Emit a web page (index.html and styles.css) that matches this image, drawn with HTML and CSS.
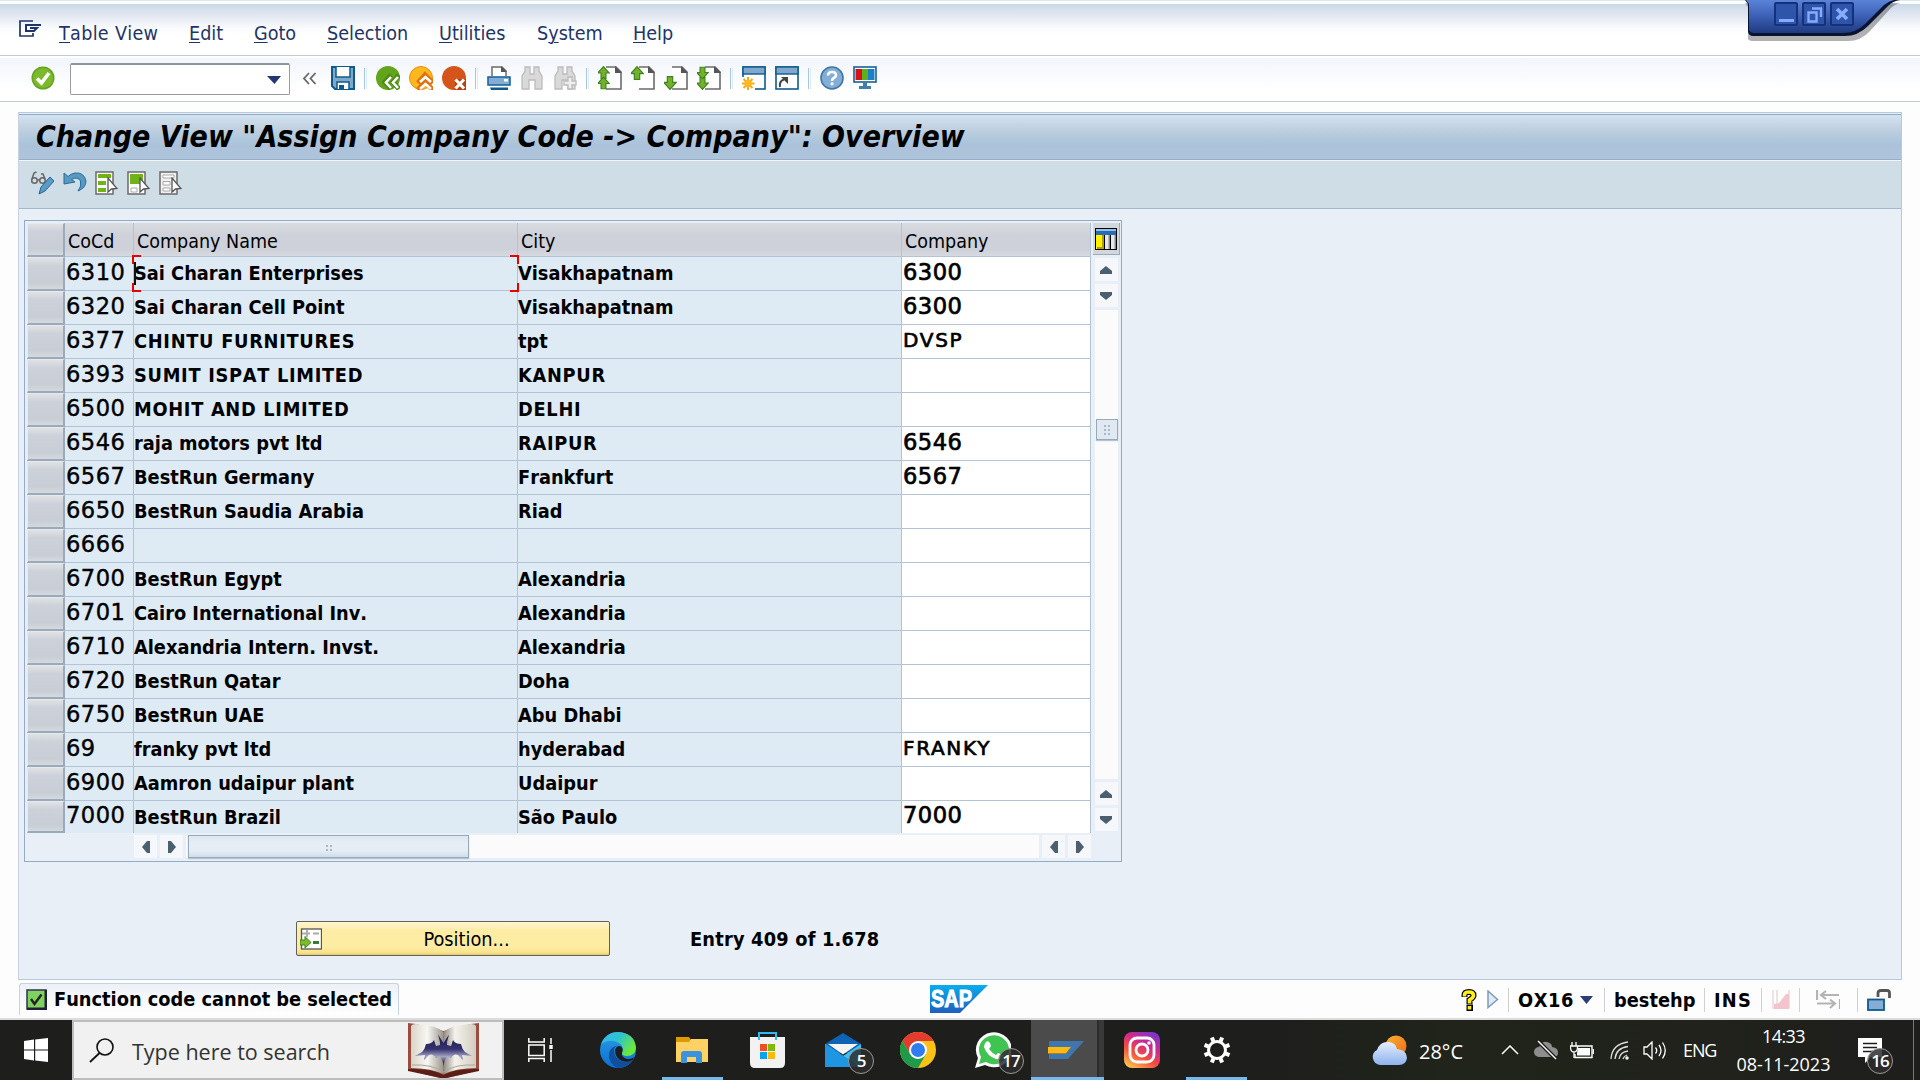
FILE: index.html
```
<!DOCTYPE html>
<html lang="en">
<head>
<meta charset="utf-8">
<title>Change View "Assign Company Code -&gt; Company": Overview</title>
<link rel="stylesheet" href="styles.css">
</head>
<body>
<svg class="defs" width="0" height="0">
  <defs>
    <linearGradient id="edge1" x1="0" y1="0" x2="1" y2="0.5"><stop offset="0" stop-color="#3ab8f2"/><stop offset=".5" stop-color="#2cc3d0"/><stop offset="1" stop-color="#6be83c"/></linearGradient>
    <linearGradient id="edge2" x1="0" y1="0" x2="0" y2="1"><stop offset="0" stop-color="#2b9ce6"/><stop offset="1" stop-color="#0a6fd0"/></linearGradient>
    <linearGradient id="insta" x1="0.2" y1="1" x2="0.8" y2="0"><stop offset="0" stop-color="#fdc04f"/><stop offset=".35" stop-color="#f4503c"/><stop offset=".65" stop-color="#d22a8c"/><stop offset="1" stop-color="#7a35cf"/></linearGradient>
    <linearGradient id="sapg" x1="0" y1="0" x2="0" y2="1"><stop offset="0" stop-color="#08aeee"/><stop offset="1" stop-color="#1f5fbd"/></linearGradient>
    <linearGradient id="win" x1="0" y1="0" x2="0" y2="1"><stop offset="0" stop-color="#5a83d8"/><stop offset=".5" stop-color="#3a5fb4"/><stop offset="1" stop-color="#1f3a80"/></linearGradient>
    <linearGradient id="page1" x1="0" y1="0" x2="1" y2="0"><stop offset="0" stop-color="#d9d4c8"/><stop offset=".5" stop-color="#f8f7f2"/><stop offset="1" stop-color="#9a968c"/></linearGradient>
    <linearGradient id="page2" x1="0" y1="0" x2="1" y2="0"><stop offset="0" stop-color="#8f8b82"/><stop offset=".35" stop-color="#f4f2ec"/><stop offset="1" stop-color="#d2cdc0"/></linearGradient>
    <linearGradient id="ink" x1="0" y1="0" x2="0" y2="1"><stop offset="0" stop-color="#1e1d4a"/><stop offset=".45" stop-color="#34326e"/><stop offset=".68" stop-color="#a4a2c4"/><stop offset=".85" stop-color="#35336c"/></linearGradient>
    <linearGradient id="cloud" x1="0" y1="0" x2="0" y2="1"><stop offset="0" stop-color="#e6eefc"/><stop offset="1" stop-color="#8db3ee"/></linearGradient>
    <linearGradient id="sun" x1="0" y1="0" x2="1" y2="1"><stop offset="0" stop-color="#fbb034"/><stop offset="1" stop-color="#ee6a1a"/></linearGradient>
    <symbol id="up" viewBox="0 0 12 8"><path d="M6 0L12 5V8H0V5Z" fill="#4c5f6e"/></symbol>
    <symbol id="page" viewBox="0 0 24 24"><path d="M8 1H18L23 6V23H8" fill="#fff" stroke="#6b6b6b" stroke-width="1.600"/><path d="M17 0V7H24Z" fill="#555"/></symbol>
    <symbol id="aup" viewBox="0 0 12 12"><path d="M6 .5L11.400 6.500H8.300V11.500H3.700V6.500H.6Z" fill="#74b02a" stroke="#3c8220"/></symbol>
    <symbol id="cursor" viewBox="0 0 11 18"><path d="M1 1V15L4.500 12L10 11.500Z" fill="#fff" stroke="#555" stroke-width="1.300"/></symbol>
  </defs>
</svg>

<div class="sap">
  <header class="menubar">
    <svg class="menu-icon" width="23" height="17" viewBox="0 0 23 17"><path d="M14 1H1V16H14V13" fill="none" stroke="#1f3568" stroke-width="1.700"/><path d="M22 5H7V11H15L18 8H11" fill="none" stroke="#1f3568" stroke-width="2"/></svg>
    <nav class="menus">
      <a class="wide"><u>T</u>able View</a><a><u>E</u>dit</a><a><u>G</u>oto</a><a><u>S</u>election</a><a><u>U</u>tilities</a><a>S<u>y</u>stem</a><a><u>H</u>elp</a>
    </nav>
    <svg class="window-controls" width="160" height="46" viewBox="0 0 160 46">
      <path d="M5 0L8 4V36Q9 38 14 38H108Q121 38 130 28L151 5Q156 0 162 0" fill="#000" opacity=".3" transform="translate(0 3)"/>
      <path d="M5 0L8 4V32Q9 36 13 36H105Q118 36 128 26L148 6Q153 1 160 0Z" fill="#0a1430"/>
      <path d="M6 0L9 4V30Q10 33 14 33H103Q116 33 125 24L144 5Q149 1 154 0Z" fill="url(#win)"/>
      <g fill="#2e55aa" stroke="#17307a" stroke-width="2"><rect x="35" y="3" width="22" height="22" rx="1"/><rect x="63" y="3" width="22" height="22" rx="1"/><rect x="91" y="3" width="22" height="22" rx="1"/></g>
      <path d="M39 20.500H54" stroke="#86abff" stroke-width="3"/>
      <path d="M68.500 12.500H76.500V21.500H68.500ZM72 8.500H81V17" fill="none" stroke="#86abff" stroke-width="2.400"/>
      <path d="M97 9L107 19M107 9L97 19" stroke="#86abff" stroke-width="3.600"/>
    </svg>
  </header>

  <div class="toolbar">
    <svg class="ok" width="24" height="24" viewBox="0 0 24 24"><circle cx="12" cy="12" r="11.500" fill="#64a51f"/><circle cx="12" cy="12" r="10" fill="#7dba2b"/><path d="M6 12.500L10.500 17L18 7" fill="none" stroke="#fff" stroke-width="3.600"/></svg>
    <div class="command"><svg width="14" height="9" viewBox="0 0 14 9"><path d="M0 1H14L7.500 9Z" fill="#22366f"/></svg></div>
    <svg class="collapse" width="15" height="13" viewBox="0 0 15 13"><path d="M7 1L2 6.500L7 12M13.500 1L8.500 6.500L13.500 12" fill="none" stroke="#666" stroke-width="1.800"/></svg>
    <svg width="24" height="24" viewBox="0 0 24 24"><path d="M1 1H23V23H4L1 20Z" fill="#7fa8cc" stroke="#0f5a8c" stroke-width="2"/><path d="M5 1V11H19V1" fill="#fff" stroke="#0f5a8c" stroke-width="1.500"/><path d="M6 23V16H18V23" fill="#fff" stroke="#0f5a8c" stroke-width="1.500"/><path d="M8 19H13V23H8Z" fill="#0f5a8c"/></svg>
    <i class="sep"></i>
    <svg width="24" height="24" viewBox="0 0 24 24"><circle cx="12" cy="12" r="12" fill="#63a41d"/><path d="M15 9L9 16L15 23M23 9L17 16L23 23" fill="none" stroke="#4d8a17" stroke-width="5"/><path d="M15 11L10 16.500L15 22M22 11L17 16.500L22 22" fill="none" stroke="#fff" stroke-width="2.600"/></svg>
    <svg width="24" height="24" viewBox="0 0 24 24"><circle cx="12" cy="12" r="11.500" fill="#fcb81c" stroke="#ee8a12"/><path d="M9 17L16 9L24 17M9 24L16 16L24 24" fill="none" stroke="#e2700e" stroke-width="5"/><path d="M11 16L16.500 11L22 16M11 23L16.500 18L22 23" fill="none" stroke="#fff" stroke-width="2.600"/></svg>
    <svg width="24" height="24" viewBox="0 0 24 24"><circle cx="12" cy="12" r="12" fill="#d4541a"/><path d="M13 13H24V24H13Z" fill="#b8400e"/><path d="M13.500 13.500L22 22.500M22 13.500L13.500 22.500" stroke="#fff" stroke-width="3.200"/></svg>
    <i class="sep"></i>
    <svg width="24" height="24" viewBox="0 0 24 24"><path d="M5 10V1H15L19 5V10" fill="#fff" stroke="#6b6b6b" stroke-width="1.500"/><path d="M14 0V6H20Z" fill="#555"/><rect x="1" y="11" width="22" height="8" fill="#84add4" stroke="#1b679c" stroke-width="1.600"/><rect x="17" y="13" width="4" height="2.500" fill="#fff"/><path d="M3 21.500H21V24H4Z" fill="#0f5a8c"/></svg>
    <svg width="24" height="24" viewBox="0 0 24 24"><path id="bino" d="M2 23V10L5 5V1H10V8H14V1H19V5L22 10V23H15V14H9V23Z" fill="#d9d9d9" stroke="#bcbcbc" stroke-width="1.300"/></svg>
    <svg width="24" height="24" viewBox="0 0 24 24"><use href="#bino"/><path d="M15 11H19V15H23V19H19V23H15V19H11V15H15Z" fill="#eee" stroke="#bcbcbc" stroke-width="1.300"/></svg>
    <i class="sep"></i>
    <svg width="24" height="24" viewBox="0 0 24 24"><use href="#page" width="24" height="24"/><use href="#aup" x="-1" width="13" height="13"/><use href="#aup" x="-1" y="10.500" width="13" height="13"/></svg>
    <svg width="24" height="24" viewBox="0 0 24 24"><use href="#page" width="24" height="24"/><use href="#aup" x="-1" width="14" height="14"/></svg>
    <svg width="24" height="24" viewBox="0 0 24 24"><use href="#page" width="24" height="24"/><use href="#aup" x="-1" width="14" height="14" transform="translate(0 24) scale(1 -1)"/></svg>
    <svg width="24" height="24" viewBox="0 0 24 24"><use href="#page" width="24" height="24"/><g transform="translate(0 24) scale(1 -1)"><use href="#aup" x="-1" width="13" height="13"/><use href="#aup" x="-1" y="10.500" width="13" height="13"/></g></svg>
    <i class="sep"></i>
    <svg width="24" height="24" viewBox="0 0 24 24"><rect x="1" y="1" width="22" height="22" fill="#fff" stroke="#0f5a8c" stroke-width="1.600"/><rect x="1" y="1" width="22" height="7" fill="#7fa8cc" stroke="#0f5a8c" stroke-width="1.400"/><path d="M0 11H13V24H0Z" fill="#fff"/><path d="M6 11V24M0 17.500H12.500M1.500 13L10.500 22M10.500 13L1.500 22" stroke="#f8a81c" stroke-width="2"/><circle cx="6" cy="17.500" r="3.700" fill="#fcb81c"/></svg>
    <svg width="24" height="24" viewBox="0 0 24 24"><rect x="1" y="1" width="22" height="22" fill="#fff" stroke="#0f5a8c" stroke-width="1.600"/><rect x="1" y="1" width="22" height="7" fill="#7fa8cc" stroke="#0f5a8c" stroke-width="1.400"/><path d="M5 21Q4 15 9 13.500" fill="none" stroke="#444" stroke-width="2"/><path d="M6 11H13V18Z" fill="#444"/></svg>
    <i class="sep"></i>
    <svg width="24" height="24" viewBox="0 0 24 24"><circle cx="12" cy="12" r="11" fill="#85aed6" stroke="#3f76a8" stroke-width="1.600"/><path d="M8 9.500Q8 6 12 6T16 9Q16 11 13.500 12.200Q12 13 12 15" fill="none" stroke="#fff" stroke-width="2.500"/><rect x="10.700" y="16.500" width="2.700" height="2.700" fill="#fff"/></svg>
    <svg width="24" height="24" viewBox="0 0 24 24"><rect x="1" y="1" width="22" height="15" fill="#fff" stroke="#1b5f92" stroke-width="1.600"/><path d="M2.500 3H9V14H2.500Z" fill="#d3121c"/><path d="M9 3H15V14H9Z" fill="#5fae1e"/><path d="M15 3H21.500V14H15Z" fill="#1c7fc9"/><path d="M10 16H14V20H18V23H6V20H10Z" fill="#3f7fae"/></svg>
  </div>

  <main class="panel">
    <h1 class="title">Change View "Assign Company Code -&gt; Company": Overview</h1>
    <div class="appbar">
      <svg width="24" height="24" viewBox="0 0 24 24"><g fill="none" stroke="#666" stroke-width="1.500"><circle cx="3.500" cy="9.500" r="2.800"/><circle cx="11.500" cy="9.500" r="2.800"/><path d="M6.200 9H8.800M1 8L3 2L5.500 1M14 8L12 3H10M16 9L19 12"/></g><path d="M8 23L10 16L19 6L23 10L14 20Z" fill="#5b9bc6" stroke="#1f6796"/></svg>
      <svg width="24" height="24" viewBox="0 0 24 24"><path d="M1 2V13L12 11L8.500 8.500Q15 5 17.500 10Q19 15 15 20Q23 17 23 10Q21 1 12 2Q8 2.500 5 5.500Z" fill="#5b98c0" stroke="#1f6f9c"/></svg>
      <svg width="24" height="24" viewBox="0 0 24 24"><path d="M1 1H18V23H1Z" fill="#fff" stroke="#6b6b6b" stroke-width="1.500"/><path d="M3 3H16V7H3ZM3 10H11V14H3ZM3 17H11V21H3Z" fill="#6fb417"/><use href="#cursor" x="12" y="6" width="11" height="18"/></svg>
      <svg width="24" height="24" viewBox="0 0 24 24"><path d="M1 1H18V23H1Z" fill="#fff" stroke="#6b6b6b" stroke-width="1.500"/><path d="M3 3H16V13H3Z" fill="#6fb417"/><path d="M4 17H10V21H4Z" fill="none" stroke="#aaa"/><use href="#cursor" x="12" y="6" width="11" height="18"/></svg>
      <svg width="24" height="24" viewBox="0 0 24 24"><path d="M1 1H18V23H1Z" fill="#f1f1f1" stroke="#6b6b6b" stroke-width="1.500"/><path d="M4 4H15V7H4ZM4 10.500H11V14H4ZM4 17H11V20H4Z" fill="#fff" stroke="#aaa"/><use href="#cursor" x="12" y="6" width="11" height="18"/></svg>
    </div>

    <div class="content">
      <section class="table-control">
        <div class="grid">
          <div class="row head"><b></b><span>CoCd</span><span>Company Name</span><span>City</span><span>Company</span></div>
          <div class="row"><b></b><span class="mono">6310</span><span>Sai Charan Enterprises<i class="corners"></i></span><span>Visakhapatnam</span><span class="mono edit">6300</span></div>
          <div class="row"><b></b><span class="mono">6320</span><span>Sai Charan Cell Point</span><span>Visakhapatnam</span><span class="mono edit">6300</span></div>
          <div class="row"><b></b><span class="mono">6377</span><span class="upper">CHINTU FURNITURES</span><span>tpt</span><span class="mono edit caps">DVSP</span></div>
          <div class="row"><b></b><span class="mono">6393</span><span class="upper">SUMIT ISPAT LIMITED</span><span class="upper">KANPUR</span><span class="edit"></span></div>
          <div class="row"><b></b><span class="mono">6500</span><span class="upper">MOHIT AND LIMITED</span><span class="upper">DELHI</span><span class="edit"></span></div>
          <div class="row"><b></b><span class="mono">6546</span><span>raja motors pvt ltd</span><span class="upper">RAIPUR</span><span class="mono edit">6546</span></div>
          <div class="row"><b></b><span class="mono">6567</span><span>BestRun Germany</span><span>Frankfurt</span><span class="mono edit">6567</span></div>
          <div class="row"><b></b><span class="mono">6650</span><span>BestRun Saudia Arabia</span><span>Riad</span><span class="edit"></span></div>
          <div class="row"><b></b><span class="mono">6666</span><span></span><span></span><span class="edit"></span></div>
          <div class="row"><b></b><span class="mono">6700</span><span>BestRun Egypt</span><span>Alexandria</span><span class="edit"></span></div>
          <div class="row"><b></b><span class="mono">6701</span><span>Cairo International Inv.</span><span>Alexandria</span><span class="edit"></span></div>
          <div class="row"><b></b><span class="mono">6710</span><span>Alexandria Intern. Invst.</span><span>Alexandria</span><span class="edit"></span></div>
          <div class="row"><b></b><span class="mono">6720</span><span>BestRun Qatar</span><span>Doha</span><span class="edit"></span></div>
          <div class="row"><b></b><span class="mono">6750</span><span>BestRun UAE</span><span>Abu Dhabi</span><span class="edit"></span></div>
          <div class="row"><b></b><span class="mono">69</span><span>franky pvt ltd</span><span>hyderabad</span><span class="mono edit caps">FRANKY</span></div>
          <div class="row"><b></b><span class="mono">6900</span><span>Aamron udaipur plant</span><span>Udaipur</span><span class="edit"></span></div>
          <div class="row last"><b></b><span class="mono">7000</span><span>BestRun Brazil</span><span>São Paulo</span><span class="mono edit">7000</span></div>
          <div class="hscroll">
            <i class="btn"><svg class="left" width="12" height="8"><use href="#up"/></svg></i><i class="btn"><svg class="right" width="12" height="8"><use href="#up"/></svg></i>
            <div class="htrack"><i class="hthumb"></i></div>
            <i class="btn"><svg class="left" width="12" height="8"><use href="#up"/></svg></i><i class="btn"><svg class="right" width="12" height="8"><use href="#up"/></svg></i>
          </div>
        </div>
        <div class="vscroll">
          <div class="config"><svg width="22" height="22" viewBox="0 0 22 22"><rect width="22" height="22" fill="#000"/><path d="M1 1H21V3H1Z" fill="#8cc4ee"/><path d="M1 3H21V7H1Z" fill="#2a6cb0"/><path d="M1 7H8V21H1Z" fill="#fff100"/><path d="M7 7H9V21H2V19H7Z" fill="#b0a000"/><path d="M10 7H15V21H10ZM16 7H21V21H16Z" fill="#e6e8ec"/><path d="M13.500 7H15V21H13.500ZM19.500 7H21V21H19.500Z" fill="#888"/></svg></div>
          <i class="btn"><svg width="12" height="8"><use href="#up"/></svg></i><i class="btn"><svg class="down" width="12" height="8"><use href="#up"/></svg></i>
          <div class="vtrack"><i class="vthumb"></i></div>
          <i class="btn"><svg width="12" height="8"><use href="#up"/></svg></i><i class="btn"><svg class="down" width="12" height="8"><use href="#up"/></svg></i>
        </div>
      </section>
      <div class="position-row">
        <button class="position"><svg width="22" height="22" viewBox="0 0 22 22"><rect x="1.500" y="1" width="20" height="20" fill="#fff" stroke="#555" stroke-width="1.300"/><path d="M2 5.500H10M7 2V9M13 5.500H19" stroke="#aaa" stroke-width="1.800"/><path d="M0 12H5V8.500L11 14.500L5 20V17H0Z" fill="#7ebc2a" stroke="#3c8220"/><path d="M13 14.500H19" stroke="#3c7a3c" stroke-width="3"/></svg><span>Position...</span></button>
        <strong class="entry">Entry 409 of 1.678</strong>
      </div>
    </div>
  </main>

  <footer class="statusbar">
    <div class="message"><svg width="21" height="21" viewBox="0 0 21 21"><path d="M1 1H20V20H1Z" fill="#7fd160" stroke="#30304c" stroke-width="1.500"/><path d="M1 20H20V1" fill="none" stroke="#202038" stroke-width="3"/><path d="M5 10L8.500 15L15.500 5.500" fill="none" stroke="#222" stroke-width="2.400"/></svg><span>Function code cannot be selected</span></div>
    <svg class="saplogo" width="58" height="28" viewBox="0 0 58 28"><path d="M0 0H58L30 28H0Z" fill="url(#sapg)"/><text x="1" y="22" textLength="41" lengthAdjust="spacingAndGlyphs">SAP</text></svg>
    <div class="session">
      <svg class="help" width="17" height="22" viewBox="0 0 17 22"><path d="M3.500 8V6Q3.500 3 8 3T12.500 6.500Q12.500 8.500 8.500 11V15" fill="none" stroke="#000" stroke-width="6"/><path d="M5.500 15.500H12V22H5.500Z" fill="#000"/><path d="M3.500 7.500V6Q3.500 3 8 3T12.500 6.500Q12.500 8.500 8.500 11V14.500M8.500 17V20.500" fill="none" stroke="#ffee1a" stroke-width="3.600"/></svg>
      <svg class="play" width="12" height="19" viewBox="0 0 12 19"><path d="M1 1L10.500 9.500L1 17.500Z" fill="#dfe9f4" stroke="#7f9bb8" stroke-width="1.500"/></svg>
      <span class="cell system"><em>OX16</em><svg width="13" height="8" viewBox="0 0 13 8"><path d="M0 0H13L6.500 8Z" fill="#2a3f74"/></svg></span>
      <span class="cell user"><em>bestehp</em></span>
      <span class="cell ins"><em>INS</em></span>
      <span class="cell perf"><svg width="18" height="20" viewBox="0 0 18 20"><path d="M1 0V19M5 0V19M17 0V18" stroke="#ead9dc" stroke-width="1.500"/><path d="M2 19V14L7 13L14 4H17V19Z" fill="#f2c4cc"/></svg></span>
      <span class="cell dir"><svg width="24" height="19" viewBox="0 0 24 19"><path d="M1 0V10M24 9V19M5 5H23M1 13.500H19M10 1L5 5L10 9M14 9.500L19 13.500L14 18" fill="none" stroke="#b4b4b4" stroke-width="2.200"/></svg></span>
      <span class="cell lock"><svg width="24" height="22" viewBox="0 0 24 22"><path d="M11 8V4Q11 1.500 14 1.500H20Q22.500 1.500 22.500 4V9" fill="none" stroke="#555" stroke-width="2.800"/><rect x="1" y="10.500" width="16" height="10.500" fill="#85aed6" stroke="#0f5a8c" stroke-width="1.800"/></svg></span>
    </div>
  </footer>
</div>

<div class="taskbar">
  <div class="start"><svg width="24" height="24" viewBox="0 0 24 24"><path d="M0 3L10 1.600V11.400H0ZM11.200 1.400L24 0V11.400H11.200ZM0 12.600H10V22.400L0 21ZM11.200 12.600H24V24L11.200 22.600Z" fill="#fff"/></svg></div>
  <div class="search">
    <svg width="25" height="25" viewBox="0 0 25 25"><circle cx="16" cy="9" r="8" fill="none" stroke="#111" stroke-width="1.600"/><path d="M10.500 15L1 24" stroke="#111" stroke-width="1.800"/></svg>
    <span>Type here to search</span>
    <svg class="book" width="71" height="56" viewBox="0 0 71 56"><path d="M0 1L8 2L35.500 9L63 2L71 1V48L39 56H32L0 48Z" fill="#9a4c3e"/><path d="M3 4Q4 2 8 2Q28 3 35.500 10V52Q22 46 3 46Z" fill="url(#page1)"/><path d="M68 4Q67 2 63 2Q43 3 35.500 10V52Q49 46 68 46Z" fill="url(#page2)"/><path d="M4 43Q24 42 35.500 50Q47 42 67 43" fill="none" stroke="#aaa69a"/><path d="M0 47Q24 46 35.500 53Q47 46 71 47V49L38 56H33L0 49Z" fill="#5a2018"/><path d="M35.500 21L30 12.500L32 20L32 23L28 24L26 18Q24 22 18 22Q17 27 14 30L7 34L17 33L16 38L21 33Q25 31 28 36L32 34Q35 38 35.500 45Q36 38 39 34L43 36Q46 31 50 33L55 38L54 33L64 34L57 30Q54 27 53 22Q47 22 45 18L43 24L39 23V20L41 12.500Z" fill="url(#ink)"/></svg>
  </div>
  <div class="app taskview"><svg width="25" height="24" viewBox="0 0 25 24"><path d="M.8 0V4H16.200V0M.8 7H16.200V17.500H.8ZM.8 24V20.500H16.200V24M23 0V6M23 12V24" fill="none" stroke="#fff" stroke-width="1.500"/><path d="M21.300 7H24.700V11H21.300Z" fill="#fff"/></svg></div>
  <div class="app"><svg width="36" height="36" viewBox="0 0 36 36"><circle cx="18" cy="18" r="18" fill="url(#edge2)"/><path d="M1 12Q6 0 18 0Q35 1 36 16Q35 24 27 24Q21 24 22 20Q25 15 19 11Q10 6 1 12Z" fill="url(#edge1)"/><path d="M14 18Q14 28 25 30Q31 30 34 26.500Q28 36 18 36Q8 32 9 21Q11 14 18 13.500Q14 15 14 18Z" fill="#114f9c"/><path d="M15 18Q16 14 20 14Q24 16 22 21Q21 25 27 27Q32 27 34 25L33 28Q28 31 22 29Q15 26 15 18Z" fill="#1d1d1d"/></svg></div>
  <div class="app running"><svg width="33" height="26" viewBox="0 0 33 26"><path d="M0 0H13L15 3V6H0Z" fill="#dd9a05"/><path d="M0 5H13L15 2H32V25H0Z" fill="#fdd164"/><path d="M5 26V17Q5 14 8 14H23Q26 14 26 17V26H20V20H11V26Z" fill="#3a93dc"/></svg></div>
  <div class="app"><svg width="35" height="36" viewBox="0 0 35 36"><path d="M0 5H35V31Q35 36 30 36H5Q0 36 0 31Z" fill="#f2f2f2"/><path d="M9 8V1H26V8" fill="none" stroke="#35b8ee" stroke-width="2"/><path d="M10 12H17V19H10Z" fill="#f04e23"/><path d="M18 12H25V19H18Z" fill="#80bb03"/><path d="M10 20H17V27H10Z" fill="#04a4ef"/><path d="M18 20H25V27H18Z" fill="#fdb80b"/></svg></div>
  <div class="app"><svg width="36" height="34" viewBox="0 0 36 34"><path d="M0 11L18 0L36 11V20H0Z" fill="#0f63b5"/><path d="M36 11V34H0V11L18 23Z" fill="#3cc2f2"/><path d="M0 34V11L36 34Z" fill="#1f96e2"/><path d="M3 11H33L18 21.500Z" fill="#f4f4f4"/></svg><b class="badge">5</b></div>
  <div class="app"><svg width="36" height="36" viewBox="0 0 36 36"><circle cx="18" cy="18" r="18" fill="#fbc116"/><path d="M2.400 9A18 18 0 0 1 33.600 9H18L10 22Z" fill="#e33b2e"/><path d="M2.400 9A18 18 0 0 0 18 36L26 22L18 26L10 22Z" fill="#1e9a4a"/><circle cx="18" cy="18" r="9" fill="#fff"/><circle cx="18" cy="18" r="7" fill="#2f7df0"/></svg></div>
  <div class="app"><svg width="36" height="36" viewBox="0 0 36 36"><path d="M0 36L3 26A18 17.500 0 1 1 10 33Z" fill="#fff"/><path d="M4 32L6 25A15 14.500 0 1 1 11 30Z" fill="#3fc351"/><path d="M11 10Q13 8 15 11L16 14L14 17Q17 21 21 23L23 21Q28 22 27 25Q25 28 21 27Q12 24 9 15Q9 12 11 10Z" fill="#fff"/></svg><b class="badge">17</b></div>
  <div class="app active"><svg width="36" height="19" viewBox="0 0 36 19"><path d="M1 0H36L20 18H1V13H18L23 6H1Z" fill="#3f76ad"/><path d="M0 6H23L18 12.500H0Z" fill="#fdb913"/></svg></div>
  <div class="app"><svg width="36" height="36" viewBox="0 0 36 36"><rect width="36" height="36" rx="8" fill="url(#insta)"/><rect x="6" y="6" width="24" height="24" rx="7" fill="none" stroke="#fff" stroke-width="2.800"/><circle cx="18" cy="18" r="6" fill="none" stroke="#fff" stroke-width="2.800"/><circle cx="25" cy="11" r="1.800" fill="#fff"/></svg></div>
  <div class="app running"><svg width="28" height="28" viewBox="0 0 28 28"><circle cx="14" cy="14" r="8.500" fill="none" stroke="#fff" stroke-width="3"/><g stroke="#fff" stroke-width="4" transform="rotate(22.500 14 14)"><path d="M14 .5V5M14 23V27.500M.5 14H5M23 14H27.500M4.500 4.500L7.600 7.600M20.400 20.400L23.500 23.500M4.500 23.500L7.600 20.400M20.400 7.600L23.500 4.500"/></g></svg></div>

  <div class="tray">
    <svg class="weather" width="37" height="31" viewBox="0 0 37 31"><circle cx="25" cy="11" r="10.500" fill="url(#sun)"/><path d="M9 30A8 8 0 0 1 6 15Q9 6 18 7Q25 8 26 14Q36 15 36 23Q35 30 28 30Z" fill="url(#cloud)"/></svg>
    <span class="temp">28°C</span>
    <svg class="chev" width="18" height="10" viewBox="0 0 18 10"><path d="M1 9L9 1L17 9" fill="none" stroke="#fff" stroke-width="1.500"/></svg>
    <svg class="onedrive" width="25" height="20" viewBox="0 0 25 20"><path d="M5 17A5 5 0 0 1 5 7Q8 1 13 2Q18 3 18 7Q25 8 24 14Q23 17 20 17Z" fill="#8d8d8d"/><path d="M4 1L22 19" stroke="#1d1d1d" stroke-width="4"/><path d="M4 1L22 19" stroke="#fff" stroke-width="1.500"/></svg>
    <svg class="battery" width="24" height="17" viewBox="0 0 24 17"><path d="M8 4H22V15.500H5V12" fill="none" stroke="#fff" stroke-width="1.400"/><path d="M8 6H20V13.500H7V11Z" fill="#fff"/><path d="M23.300 7V12M2 0V4M6 0V4M0.500 4H7.500V6Q7 10 4 10Q1 10 .5 6ZM4 10V16" fill="none" stroke="#fff" stroke-width="1.300"/></svg>
    <svg class="wifi" width="20" height="19" viewBox="0 0 20 19"><g fill="none" stroke="#ddd" stroke-width="1.300"><path d="M1 18Q2 3 18 1M5 18Q6 7 18 5.500M9 18Q10 11 18 10M13 18Q14 15 17 14"/></g><circle cx="17" cy="17" r="1.700" fill="#fff"/></svg>
    <svg class="sound" width="24" height="19" viewBox="0 0 24 19"><path d="M1 6H4L9 1V18L4 13H1ZM12.500 6.500Q15 9.500 12.500 12.500M16 4Q20 9.500 16 15M19.500 1.500Q25 9.500 19.500 17.500" fill="none" stroke="#fff" stroke-width="1.300"/></svg>
    <span class="lang">ENG</span>
    <div class="clock"><span class="time">14:33</span><span>08-11-2023</span></div>
    <div class="notes"><svg width="24" height="25" viewBox="0 0 24 25"><path d="M0 0H24V19H13L7 25V19H0Z" fill="#fff"/><path d="M5 5.500H19M5 9.500H19M5 13.500H15" stroke="#1d1d1d" stroke-width="1.500"/></svg><b class="badge">16</b></div>
  </div>
</div>
</body>
</html>
```
FILE: styles.css
```
* { box-sizing: border-box; }
body { margin: 0; width: 1920px; height: 1080px; overflow: hidden; font-family: "DejaVu Sans Condensed", "DejaVu Sans", sans-serif; font-size: 19.800px; font-kerning: none; color: #000; position: relative; }
svg { display: block; flex: none; }
.defs { position: absolute; }
i, em { font-style: normal; }

.sap { height: 1020px; display: flex; flex-direction: column; background: #fdfdfe; border-bottom: 2px solid #dcdcdc; }

/* menu bar */
.menubar { height: 56px; flex: none; display: flex; align-items: flex-start; position: relative; padding-left: 19px; border-bottom: 1px solid #c3c9d2; background: linear-gradient(#dde8f5 0 1px, #fff 1px 4px, #cbd8e8 4px, #dfe6f0 14px, #fafbfd 28px, #fff 36px); }
.menu-icon { margin-top: 20px; }
.menus { display: grid; grid-template-columns: 130px 65px 73px 112px 98px 96px auto; margin: 21px 0 0 17px; font-size: 19.600px; line-height: 26px; color: #1f3568; }
.menus a { white-space: nowrap; }
.menus .wide { letter-spacing: .3px; }
.menus u { text-underline-offset: 2px; text-decoration-thickness: 1px; }
.window-controls { position: absolute; left: 1740px; top: 0; }

/* standard toolbar */
.toolbar { height: 46px; flex: none; display: flex; align-items: center; gap: 9px; padding: 0 0 1px 31px; border-bottom: 1px solid #c3c9d6; background: linear-gradient(#fff 0 2px, #f2f5fb 2px, #fff 34px); }
.command { width: 220px; height: 32px; margin: 1px 3px 0 6px; border: 1px solid #9a9a9a; border-top: 2px solid #8f959c; border-radius: 2px; background: #fff; display: flex; align-items: center; justify-content: flex-end; padding-right: 8px; }
.collapse { margin-right: 5px; }
.sep { width: 3px; height: 21px; border-left: 1px solid #a9c6df; border-right: 1px solid #dcebf6; }

/* main panel */
.panel { flex: none; width: 1884px; height: 868px; margin: 10px 0 0 18px; display: flex; flex-direction: column; border: 1px solid #b9c8da; border-left: 1px solid #c8d2e2; background: #e8eff7; }
.title { margin: 1px 0 0; height: 46px; flex: none; padding-left: 17px; font-size: 30px; line-height: 44px; font-weight: bold; font-style: italic; font-kerning: auto; letter-spacing: .05px; white-space: nowrap; border-top: 1px solid #8eabc5; border-bottom: 1px solid #98aec8; background: linear-gradient(#d2e2ef, #c1d1e0 30%, #afc7dc 55%, #abc2da 70%, #adc4db); }
.appbar { height: 49px; flex: none; display: flex; gap: 8px; padding: 10px 0 0 12px; border-top: 1px solid #f2f6fa; border-bottom: 1px solid #a3b7cd; background: #cfdde7; }
.content { flex: 1; }

/* table control */
.table-control { width: 1098px; height: 642px; margin: 11px 0 0 5px; padding: 2px 0 0 2px; border: 1px solid #8fadc8; display: flex; justify-content: space-between; background: #e8eff7; }
.grid { width: 1064px; font-weight: bold; }
.row { display: grid; grid-template-columns: 38px 69px 384px 384px 189px; grid-template-rows: 34px; height: 34px; white-space: nowrap; }
.row > span { position: relative; padding-left: 0; line-height: 34px; background: #deebf5; border-right: 1px solid #b3c3d3; border-bottom: 1px solid #b3c3d3; }
.row > b { background: linear-gradient(#dfe1e4, #cdd1d9 25%, #c9cdd5 80%, #d5dade); border: 1px solid #e6eaee; border-width: 1px 2px 2px 1px; border-right-color: #9baaba; border-bottom-color: #9baaba; }
.row.head > span { background: linear-gradient(#d8dbde, #ced1d9 40%, #ced1d9 80%, #d6dbe0); font-size: 19.500px; line-height: 37px; font-weight: normal; padding-left: 3px; }
.row > .upper { letter-spacing: .7px; }
.row > span.edit { background: #fff; padding-left: 1px; -webkit-text-stroke: .7px #000; }
.row > .mono { padding-left: 1px; font: 22.600px/30px "DejaVu Sans", sans-serif; letter-spacing: .5px; -webkit-text-stroke: .4px #000; }
.row > .mono.caps { font-size: 20px; letter-spacing: 1.700px; }
.row.last { grid-template-rows: 32px; height: 32px; }
.row.last > span { border-bottom: 0; line-height: 33px; }
.row.last > .mono { line-height: 29px; }
.corners { position: absolute; left: -2px; top: -2px; width: 387px; height: 37px; background:
  linear-gradient(#e60000,#e60000) 0 0/9px 2px, linear-gradient(#e60000,#e60000) 0 0/2px 9px,
  linear-gradient(#e60000,#e60000) 100% 0/9px 2px, linear-gradient(#e60000,#e60000) 100% 0/2px 9px,
  linear-gradient(#e60000,#e60000) 0 100%/9px 2px, linear-gradient(#e60000,#e60000) 0 100%/2px 9px,
  linear-gradient(#e60000,#e60000) 100% 100%/9px 2px, linear-gradient(#e60000,#e60000) 100% 100%/2px 9px,
  linear-gradient(#111,#111) 2px 7px/2px 23px;
  background-repeat: no-repeat; z-index: 2; }

.btn { width: 23px; height: 23px; flex: none; background: #f5f7fb; display: flex; align-items: center; justify-content: center; }
.down { transform: rotate(180deg); }
.left { transform: rotate(-90deg); }
.right { transform: rotate(90deg); }
.hscroll { display: flex; gap: 3px; margin: 2px 0 0 107px; }
.htrack { flex: 1; background: #fbfbfc; padding-left: 2px; }
.hthumb, .vthumb { display: block; border: 1px solid #98a9b9; box-shadow: 0 1px 1px #b8c2cc; }
.hthumb { width: 281px; height: 23px; background: radial-gradient(#a9b8c8 1px, transparent 1.200px) 136px 8px/4px 4px no-repeat, radial-gradient(#a9b8c8 1px, transparent 1.200px) 140px 8px/4px 4px no-repeat, radial-gradient(#a9b8c8 1px, transparent 1.200px) 136px 12px/4px 4px no-repeat, radial-gradient(#a9b8c8 1px, transparent 1.200px) 140px 12px/4px 4px no-repeat, linear-gradient(#dce7f0, #e5edf5 30%, #e5edf5 70%, #cfdee9); }
.vscroll { width: 29px; display: flex; flex-direction: column; gap: 3px; padding: 0 1px 30px 0; align-items: center; }
.config { width: 27px; height: 32px; flex: none; display: flex; align-items: center; justify-content: center; background: #d3d7db; border-bottom: 1px solid #9baaba; border-right: 1px solid #9baaba; }
.vtrack { flex: 1; width: 23px; background: #fbfbfc; padding: 109px 0 0 1px; }
.vthumb { width: 22px; height: 21px; background: radial-gradient(#a9b8c8 1px, transparent 1.200px) 6px 4px/4px 4px no-repeat, radial-gradient(#a9b8c8 1px, transparent 1.200px) 10px 4px/4px 4px no-repeat, radial-gradient(#a9b8c8 1px, transparent 1.200px) 6px 8px/4px 4px no-repeat, radial-gradient(#a9b8c8 1px, transparent 1.200px) 10px 8px/4px 4px no-repeat, radial-gradient(#a9b8c8 1px, transparent 1.200px) 6px 12px/4px 4px no-repeat, radial-gradient(#a9b8c8 1px, transparent 1.200px) 10px 12px/4px 4px no-repeat, #e0e9f1; }

.position-row { display: flex; align-items: center; margin: 59px 0 0 277px; }
.position { width: 314px; height: 35px; padding: 0 0 0 3px; display: flex; align-items: center; border: 1px solid #62605a; border-radius: 2px; background: linear-gradient(#fff7d6, #fdeca4 25%, #fdeca4 75%, #fbe48c 92%, #e0c870); font: 19.800px "DejaVu Sans Condensed", "DejaVu Sans", sans-serif; color: #000; }
.position span { flex: 1; text-align: center; padding: 1px 0 0 2px; }
.entry { margin-left: 80px; padding-top: 1px; letter-spacing: .2px; }

/* status bar */
.statusbar { flex: 1; display: flex; align-items: flex-start; font-weight: bold; }
.message { width: 380px; height: 32px; margin: 3px 0 0 19px; padding-left: 6px; display: flex; align-items: center; gap: 7px; border: 1px solid #c8d3df; border-bottom: 0; border-radius: 3px 3px 0 0; background: linear-gradient(#ecf1f7, #fff); white-space: nowrap; }
.saplogo { margin: 5px 0 0 531px; }
.saplogo text { font: bold 24px "Liberation Sans", sans-serif; fill: #fff; stroke: #fff; stroke-width: 1px; }
.session { display: flex; align-items: center; height: 39px; margin-left: 473px; }
.play { margin: 0 9px 0 9px; }
.cell { height: 24px; display: flex; align-items: center; border-left: 1px solid #d0d0d0; }
.cell em { padding-top: 2px; }
.system { width: 96px; padding-left: 9px; gap: 6px; }
.system em { letter-spacing: .6px; }
.user { width: 100px; padding-left: 9px; }
.ins { width: 57px; padding-left: 9px; letter-spacing: 1.200px; }
.perf { width: 38px; padding-left: 10px; }
.dir { width: 58px; padding-left: 16px; }
.lock { padding-left: 9px; }

/* taskbar */
.taskbar { height: 60px; display: flex; background: #1e1e1d; color: #fff; font-family: "Open Sans", "Noto Sans", sans-serif; }
.start { width: 72px; display: flex; align-items: center; justify-content: center; }
.search { width: 432px; display: flex; align-items: center; padding-left: 15px; border: 2px solid #bdbdbd; background: #f1f1f1; color: #333; font-size: 21.500px; white-space: nowrap; }
.search span { flex: none; width: 294px; padding: 2px 0 0 18px; }
.app { width: 75px; display: flex; align-items: center; justify-content: center; position: relative; flex: none; }
.taskview { width: 72px; padding-left: 0; margin-right: 4px; }
.running::after, .active::after { content: ""; position: absolute; bottom: 0; left: 7px; width: 61px; height: 3px; background: #76b9ed; }
.active { width: 73px; margin-left: 1px; background: linear-gradient(90deg, #4b4b4b 0 66px, #2c2c2c 66px 68px, #393939 68px); padding-right: 4px; }
.active::after { left: 0; width: 73px; }
.badge { position: absolute; left: 43px; top: 28px; width: 26px; height: 26px; border: 1px solid #999; border-radius: 50%; background: rgba(45,45,45,.85); font-size: 17px; font-weight: 600; line-height: 24px; text-align: center; letter-spacing: -1px; }
.tray { flex: 1; display: grid; grid-template-columns: 48px 82px 33px 36px 40px 33px 40px 53px 122px auto; align-items: center; justify-content: start; margin-right: 6px; padding-left: 117px; border-right: 1px solid #777; background: linear-gradient(90deg, #1e1e1d, #20241a 30%, #20221b 70%, #1e1e1d); white-space: nowrap; }
.temp { font-size: 20px; padding-top: 2px; }
.lang { font-size: 18px; letter-spacing: -1.100px; }
.clock { width: 95px; display: flex; flex-direction: column; align-items: center; font-size: 18px; line-height: 28px; }
.time { letter-spacing: -.6px; }
.notes { position: relative; }
.notes .badge { left: 9px; top: 10px; }
```
